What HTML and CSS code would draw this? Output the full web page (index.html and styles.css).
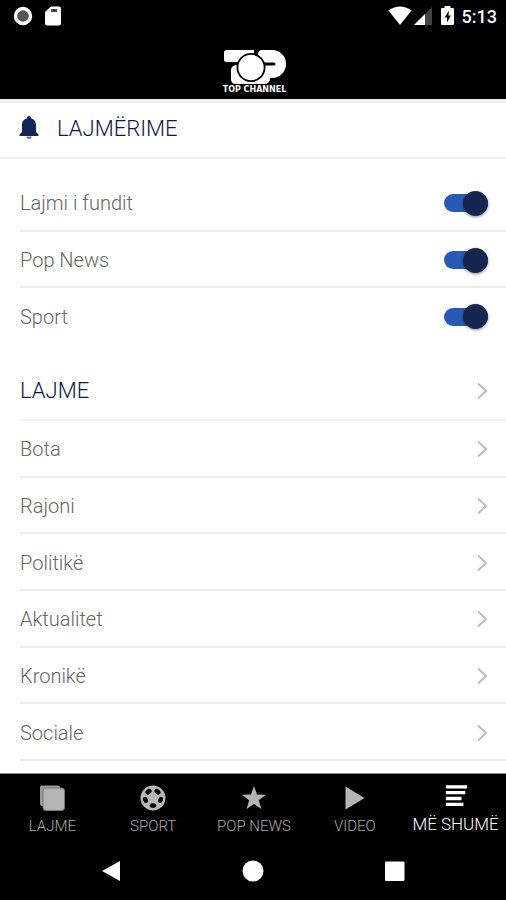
FILE: index.html
```html
<!DOCTYPE html>
<html lang="sq">
<head>
<meta charset="utf-8">
<meta name="viewport" content="width=device-width, initial-scale=1">
<title>Top Channel</title>
<link rel="stylesheet" href="styles.css">
</head>
<body>
<header class="top">
  <div class="status">
    <svg class="status-icon" width="20" height="20" viewBox="0 0 20 20" aria-hidden="true"><circle cx="10" cy="10" r="7.5" fill="#555" stroke="#fff" stroke-width="3.4"/></svg>
    <svg class="status-icon" width="16" height="20" viewBox="0 0 16 20" aria-hidden="true"><path d="M6 .5h8a2 2 0 0 1 2 2v15a2 2 0 0 1-2 2H2a2 2 0 0 1-2-2V6z" fill="#fff"/><path d="M6 4.500h6" stroke="#555" stroke-width="3"/><path d="M8.300 4.500h1.500" stroke="#111" stroke-width="2"/></svg>
    <span class="spacer"></span>
    <svg width="24" height="20" viewBox="0 0 24 20" aria-hidden="true"><path d="M.5 4.5Q12-3.500 23.500 4.500L12 19z" fill="#fff"/></svg>
    <svg class="signal" width="18" height="20" viewBox="0 0 18 20" aria-hidden="true"><path d="M18 1v18H0z" fill="#444"/><path d="M11 8v11H0z" fill="#fff"/></svg>
    <svg class="battery" width="13" height="20" viewBox="0 0 13 20" aria-hidden="true"><path d="M3.500 0h6v2H12a1 1 0 0 1 1 1v15a1 1 0 0 1-1 1H1a1 1 0 0 1-1-1V3a1 1 0 0 1 1-1h2.500z" fill="#fff"/><path d="M8 4.500 3.500 11.500h2.500V16.500L10 9.500H7.500z" fill="#111"/></svg>
    <span class="clock">5:13</span>
  </div>
  <div class="brand">
    <svg width="62" height="34" viewBox="0 0 62 34" aria-hidden="true">
      <path d="M2.500 0H30v12H2.500A2.500 2.500 0 0 1 0 9.500v-7A2.500 2.500 0 0 1 2.500 0z" fill="#fff"/>
      <path d="M12 15h34v13q0 6-6 6H12q-5 0-5-5V20q0-4 5-5z" fill="#fff"/>
      <path d="M38 0h10a14 14 0 0 1 0 28H36V14L34 5q0-5 4-5z" fill="#fff"/>
      <path d="M32 0v8" stroke="#000" stroke-width="3"/>
      <path d="M38 14h12" stroke="#000" stroke-width="3" stroke-linecap="round"/>
      <circle cx="27" cy="17.500" r="13.600" fill="#fff" stroke="#000" stroke-width="1.800"/>
    </svg>
    <span class="brand-name">TOP CHANNEL</span>
  </div>
</header>
<main class="content">
  <h1 class="title">
    <svg width="20" height="24" viewBox="0 0 20 24" aria-hidden="true"><path d="M10 0a1.800 1.800 0 0 1 1.800 2.200C15.500 3 17 6 17 9v7l2.500 2.500V20H.5v-1.500L3 16V9c0-3 1.500-6 5.200-6.800A1.800 1.800 0 0 1 10 0z" fill="#14255a"/><path d="M7.500 20.500h5a2.500 2.500 0 0 1-5 0z" fill="#6f7895"/></svg>
    LAJMËRIME
  </h1>
  <div class="group switches">
    <label class="row"><span>Lajmi i fundit</span><input class="switch" type="checkbox" role="switch" checked></label>
    <label class="row"><span>Pop News</span><input class="switch" type="checkbox" role="switch" checked></label>
    <label class="row"><span>Sport</span><input class="switch" type="checkbox" role="switch" checked></label>
  </div>
  <a class="row section" href="#lajme">LAJME<svg class="chevron" viewBox="0 0 12 18" aria-hidden="true"><path d="M2 1.500 10 9 2 16.500"/></svg></a>
  <nav class="group links" aria-label="Lajme">
    <a class="row" href="#bota">Bota<svg class="chevron" viewBox="0 0 12 18" aria-hidden="true"><path d="M2 1.500 10 9 2 16.500"/></svg></a>
    <a class="row" href="#rajoni">Rajoni<svg class="chevron" viewBox="0 0 12 18" aria-hidden="true"><path d="M2 1.500 10 9 2 16.500"/></svg></a>
    <a class="row" href="#politike">Politikë<svg class="chevron" viewBox="0 0 12 18" aria-hidden="true"><path d="M2 1.500 10 9 2 16.500"/></svg></a>
    <a class="row" href="#aktualitet">Aktualitet<svg class="chevron" viewBox="0 0 12 18" aria-hidden="true"><path d="M2 1.500 10 9 2 16.500"/></svg></a>
    <a class="row" href="#kronike">Kronikë<svg class="chevron" viewBox="0 0 12 18" aria-hidden="true"><path d="M2 1.500 10 9 2 16.500"/></svg></a>
    <a class="row" href="#sociale">Sociale<svg class="chevron" viewBox="0 0 12 18" aria-hidden="true"><path d="M2 1.500 10 9 2 16.500"/></svg></a>
  </nav>
</main>
<footer class="bottom">
  <nav class="tabs" aria-label="Menu">
    <a class="tab" href="#t1"><svg width="26" height="26" viewBox="0 0 26 26" aria-hidden="true"><path d="M3 .5h16a2 2 0 0 1 2 2V5H5v16H3a2 2 0 0 1-2-2V2.500a2 2 0 0 1 2-2z" fill="#999"/><rect x="4" y="3" width="21.500" height="22.500" rx="3" fill="#b4b4b4" stroke="#777"/></svg>LAJME</a>
    <a class="tab" href="#t2"><svg width="26" height="26" viewBox="0 0 26 26" aria-hidden="true"><circle cx="13" cy="13" r="12.500" fill="#b8b8b8"/><g fill="#000"><ellipse cx="8.500" cy="6.700" rx="3.300" ry="2.500" transform="rotate(-35 8.500 6.700)"/><ellipse cx="17.500" cy="6.700" rx="3.300" ry="2.500" transform="rotate(35 17.500 6.700)"/><ellipse cx="5.500" cy="15" rx="2.300" ry="3.300" transform="rotate(-20 5.500 15)"/><ellipse cx="20.500" cy="15" rx="2.300" ry="3.300" transform="rotate(20 20.500 15)"/><ellipse cx="13" cy="20.500" rx="3.300" ry="2.300"/></g></svg>SPORT</a>
    <a class="tab" href="#t3"><svg width="26" height="26" viewBox="0 0 26 26" aria-hidden="true"><path d="m13 1 3 8.500 9 .3-7.200 5.500 2.600 8.700L13 18.900 5.600 24l2.600-8.700L1 9.800l9-.3z" fill="#b4b4b4"/></svg>POP NEWS</a>
    <a class="tab" href="#t4"><svg width="26" height="26" viewBox="0 0 26 26" aria-hidden="true"><path d="M3.500 1.500 22.500 13l-19 11.500z" fill="#b4b4b4"/></svg>VIDEO</a>
    <a class="tab active" href="#t5" aria-current="page"><svg width="26" height="26" viewBox="0 0 26 26" aria-hidden="true"><path d="M2 2h23M2 8.300h21M2 14.600h17M2 21h19" stroke="#fff" stroke-width="3.600"/></svg>MË SHUMË</a>
  </nav>
  <div class="system">
    <button aria-label="Back"><svg width="22" height="22" viewBox="0 0 22 22"><path d="M20 1v20L2 11z" fill="#fff"/></svg></button>
    <button aria-label="Home"><svg width="22" height="22" viewBox="0 0 22 22"><circle cx="11" cy="11" r="10.500" fill="#fff"/></svg></button>
    <button aria-label="Recents"><svg width="22" height="22" viewBox="0 0 22 22"><rect x="1" y="1.500" width="19.500" height="19.500" rx="1" fill="#fff"/></svg></button>
  </div>
</footer>
</body>
</html>
```
FILE: styles.css
```css
* { box-sizing: border-box; }
body {
  margin: 0;
  min-height: 100vh;
  display: flex;
  flex-direction: column;
  background: #fff;
  color: #666;
  font-family: Roboto, "Liberation Sans", sans-serif;
  font-size: 20px;
  font-weight: 300;
}
svg { display: block; flex: none; }
a { color: inherit; text-decoration: none; }

.top { background: #000; color: #fff; }
.status {
  display: flex;
  align-items: center;
  height: 32px;
  padding: 0 9px 0 13px;
}
.status-icon { margin-right: 12px; }
.spacer { flex: 1; }
.signal { margin-left: 2px; }
.battery { margin: 0 8px 0 9px; }
.clock { font-size: 18px; font-weight: 500; }
.brand {
  display: flex;
  flex-direction: column;
  align-items: center;
  height: 67px;
  padding: 18px 0 0 3px;
}
.brand-name {
  margin-top: 2px;
  font-family: "DejaVu Sans", sans-serif;
  font-size: 8px;
  font-weight: 700;
  line-height: 8px;
}

.content {
  flex: 1;
  display: flex;
  flex-direction: column;
  padding-bottom: 12px;
  border-top: 4px solid #f1efef;
}
.title {
  display: flex;
  align-items: center;
  gap: 18px;
  height: 56px;
  margin: 0 0 16px;
  padding: 0 19px 4px;
  border-bottom: 2px solid #efefef;
  color: #0d1748;
  font-size: 22px;
  font-weight: 300;
}
.group { display: flex; flex-direction: column; }
.switches { flex: 3; margin-bottom: 15px; }
.links { flex: 6; }
.row {
  flex: 1;
  display: flex;
  align-items: center;
  justify-content: space-between;
  margin-left: 20px;
  padding: 2px 18px 0 0;
  border-bottom: 2px solid #ececec;
}
.switches .row:last-child { border-bottom-color: transparent; }
.section {
  flex: none;
  height: 61px;
  color: #0d1748;
  font-size: 22px;
}
.section.row { border-bottom-color: #f5f5f5; }
.chevron {
  width: 12px;
  height: 18px;
  fill: none;
  stroke: #bdbdbd;
  stroke-width: 2;
}
.switch {
  appearance: none;
  display: flex;
  align-items: center;
  justify-content: flex-end;
  width: 44px;
  height: 18px;
  margin: 0;
  border-radius: 9px;
  background: #285ab5;
}
.switch::before {
  content: "";
  width: 25px;
  height: 25px;
  flex: none;
  border-radius: 50%;
  background: #14264f;
  box-shadow: 0 1px 3px #0007;
}
.switch:not(:checked) { justify-content: flex-start; background: #bbb; }

.bottom { background: #000; border-top: 1px solid #888; }
.tabs {
  display: grid;
  grid-template-columns: repeat(5, 1fr);
  height: 69px;
  padding: 11px 0 0 2px;
}
.tab {
  display: flex;
  flex-direction: column;
  align-items: center;
  gap: 6px;
  color: #aaa;
  font-size: 15px;
  line-height: 18px;
  white-space: nowrap;
}
.active { color: #fff; font-size: 17px; }
.system {
  display: flex;
  justify-content: center;
  gap: 120px;
  height: 57px;
  padding-top: 17px;
}
.system button {
  width: 22px;
  height: 22px;
  padding: 0;
  border: 0;
  background: none;
}
.active svg { width: 24px; height: 24px; }
```
